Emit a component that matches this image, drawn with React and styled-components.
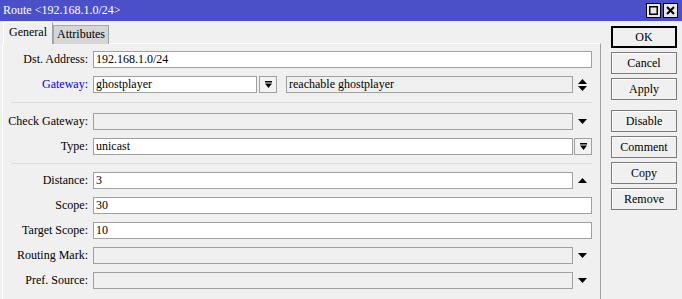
import React from "react";
import styled, { createGlobalStyle } from "styled-components";

const Global = createGlobalStyle`
  html, body { margin: 0; padding: 0; background: #f0f0f0; }
  body { font-family: "Liberation Serif", "DejaVu Serif", "Times New Roman", serif; font-size: 12px; color: #000; }
`;

const Window = styled.div`
  width: 682px;
  height: 299px;
  background: #f0f0f0;
  display: flex;
  flex-direction: column;
  overflow: hidden;
  font-family: "Liberation Serif", "DejaVu Serif", serif;
  font-size: 12px;
`;

const TitleBar = styled.div`
  height: 21px;
  flex: none;
  background: #4b50c8;
  color: #fff;
  display: flex;
  align-items: center;
  padding-left: 3px;
  padding-right: 4px;
`;

const TitleText = styled.span`
  flex: 1;
  white-space: nowrap;
`;

const WinBtn = styled.div`
  width: 13px;
  height: 13px;
  border: 1px solid #000;
  background: #e8e8e8;
  display: flex;
  align-items: center;
  justify-content: center;
  margin-left: 2px;
`;

const Main = styled.div`
  flex: 1;
  display: flex;
  min-height: 0;
`;

const LeftPane = styled.div`
  width: 599px;
  margin-left: 2px;
  padding-top: 2px;
  display: flex;
  flex-direction: column;
`;

const Tabs = styled.div`
  height: 21px;
  display: flex;
  align-items: flex-end;
  padding-left: 1px;
  position: relative;
  z-index: 1;
  margin-bottom: -1px;
`;

const Tab = styled.div`
  box-sizing: border-box;
  height: ${(p) => (p.$active ? "22px" : "19px")};
  padding: 0 ${(p) => (p.$active ? "5px" : "3px")};
  background: ${(p) => (p.$active ? "#f0f0f0" : "#d6d6d6")};
  border-top: 1px solid ${(p) => (p.$active ? "#ffffff" : "#a8a8a8")};
  border-left: 1px solid ${(p) => (p.$active ? "#ffffff" : "#a8a8a8")};
  border-right: 1px solid #a0a0a0;
  display: flex;
  align-items: center;
  padding-bottom: ${(p) => (p.$active ? "3px" : "1px")};
  white-space: nowrap;
`;

const Panel = styled.div`
  flex: 1;
  border-top: 1px solid #ffffff;
  border-left: 1px solid #ffffff;
  border-right: 1px solid #a0a0a0;
  padding: 7px 8px 0 0;
  display: flex;
  flex-direction: column;
  gap: 8px;
`;

const Row = styled.div`
  height: 17px;
  display: flex;
  align-items: stretch;
`;

const Label = styled.div`
  width: 85px;
  margin-right: 5px;
  flex: none;
  display: flex;
  align-items: center;
  justify-content: flex-end;
  white-space: nowrap;
  color: ${(p) => (p.$link ? "#0000ee" : "#000")};
`;

const Field = styled.div`
  box-sizing: border-box;
  flex: ${(p) => (p.$width ? "none" : "1")};
  width: ${(p) => (p.$width ? `${p.$width}px` : "auto")};
  margin-left: ${(p) => p.$ml || 0}px;
  border: 1px solid #a0a0a0;
  background: ${(p) => (p.$disabled ? "#f0f0f0" : "#ffffff")};
  padding-left: 2px;
  display: flex;
  align-items: center;
  white-space: nowrap;
  overflow: hidden;
`;

const IconSlot = styled.div`
  width: 19px;
  flex: none;
  display: flex;
  align-items: center;
  justify-content: center;
`;

const SmallBtn = styled.div`
  box-sizing: border-box;
  width: 18px;
  flex: none;
  margin-left: ${(p) => p.$ml || 1}px;
  border: 1px solid #a0a0a0;
  background: #f2f2f2;
  display: flex;
  align-items: center;
  justify-content: center;
`;

const Separator = styled.div`
  height: 1px;
  background: #dcdcdc;
  margin: ${(p) => (p.$loose ? "1px 0 2px 8px" : "0 0 0 8px")};
`;

const ButtonCol = styled.div`
  width: 66px;
  margin-left: 10px;
  padding-top: 5px;
  display: flex;
  flex-direction: column;
  gap: 4px;
`;

const Button = styled.div`
  box-sizing: border-box;
  height: 22px;
  border: ${(p) => (p.$default ? "2px solid #000" : "1px solid #7a7a7a")};
  box-shadow: ${(p) => (p.$default ? "none" : "inset 1px 1px 0 #ffffff")};
  background: #f0f0f0;
  display: flex;
  align-items: center;
  justify-content: center;
  margin-top: ${(p) => (p.$groupStart ? "6px" : "0")};
`;

const DownArrow = () => (
  <svg width="9" height="5" viewBox="0 0 9 5">
    <polygon points="0,0 9,0 4.5,5" fill="#000" />
  </svg>
);

const UpArrow = () => (
  <svg width="9" height="5" viewBox="0 0 9 5">
    <polygon points="4.5,0 9,5 0,5" fill="#000" />
  </svg>
);

const UpDownArrow = () => (
  <svg width="9" height="12" viewBox="0 0 9 12">
    <polygon points="4.5,0 9,5 0,5" fill="#000" />
    <polygon points="0,7 9,7 4.5,12" fill="#000" />
  </svg>
);

const BarDownArrow = () => (
  <svg width="7" height="7" viewBox="0 0 7 7">
    <rect x="0" y="0" width="7" height="1.5" fill="#000" />
    <polygon points="0,2.5 7,2.5 3.5,7" fill="#000" />
  </svg>
);

export default function App() {
  return (
    <>
      <Global />
      <Window>
        <TitleBar>
          <TitleText>Route &lt;192.168.1.0/24&gt;</TitleText>
          <WinBtn>
            <svg width="9" height="9" viewBox="0 0 9 9">
              <rect x="0.75" y="0.75" width="7.5" height="7.5" fill="none" stroke="#000" strokeWidth="1.5" />
            </svg>
          </WinBtn>
          <WinBtn>
            <svg width="9" height="9" viewBox="0 0 9 9">
              <path d="M1 1 L8 8 M8 1 L1 8" stroke="#000" strokeWidth="2" />
            </svg>
          </WinBtn>
        </TitleBar>
        <Main>
          <LeftPane>
            <Tabs>
              <Tab $active>General</Tab>
              <Tab>Attributes</Tab>
            </Tabs>
            <Panel>
              <Row>
                <Label>Dst. Address:</Label>
                <Field>192.168.1.0/24</Field>
              </Row>
              <Row>
                <Label $link>Gateway:</Label>
                <Field $width={164}>ghostplayer</Field>
                <SmallBtn $ml={2}>
                  <BarDownArrow />
                </SmallBtn>
                <Field $disabled $ml={9}>reachable ghostplayer</Field>
                <IconSlot>
                  <UpDownArrow />
                </IconSlot>
              </Row>
              <Separator $loose />
              <Row>
                <Label>Check Gateway:</Label>
                <Field $disabled />
                <IconSlot>
                  <DownArrow />
                </IconSlot>
              </Row>
              <Row>
                <Label>Type:</Label>
                <Field>unicast</Field>
                <SmallBtn>
                  <BarDownArrow />
                </SmallBtn>
              </Row>
              <Separator />
              <Row>
                <Label>Distance:</Label>
                <Field>3</Field>
                <IconSlot>
                  <UpArrow />
                </IconSlot>
              </Row>
              <Row>
                <Label>Scope:</Label>
                <Field>30</Field>
              </Row>
              <Row>
                <Label>Target Scope:</Label>
                <Field>10</Field>
              </Row>
              <Row>
                <Label>Routing Mark:</Label>
                <Field $disabled />
                <IconSlot>
                  <DownArrow />
                </IconSlot>
              </Row>
              <Row>
                <Label>Pref. Source:</Label>
                <Field $disabled />
                <IconSlot>
                  <DownArrow />
                </IconSlot>
              </Row>
            </Panel>
          </LeftPane>
          <ButtonCol>
            <Button $default>OK</Button>
            <Button>Cancel</Button>
            <Button>Apply</Button>
            <Button $groupStart>Disable</Button>
            <Button>Comment</Button>
            <Button>Copy</Button>
            <Button>Remove</Button>
          </ButtonCol>
        </Main>
      </Window>
    </>
  );
}
